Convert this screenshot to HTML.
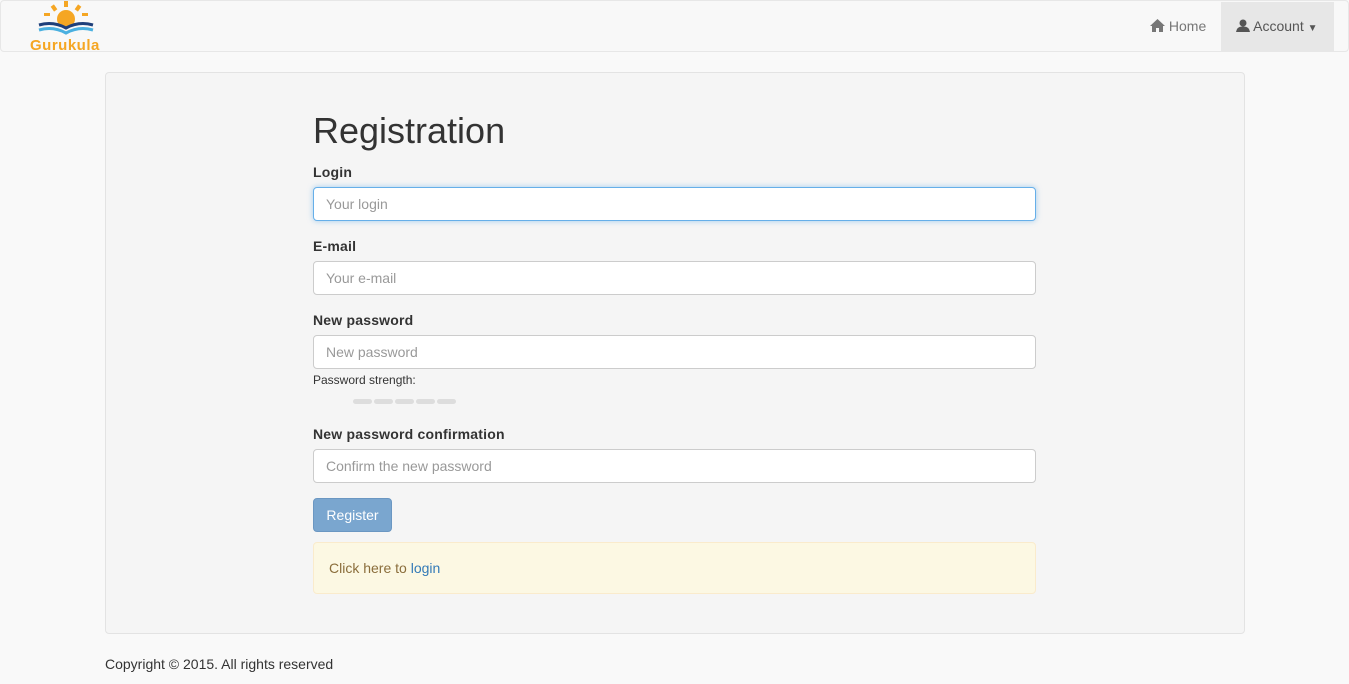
<!DOCTYPE html>
<html><head><meta charset="utf-8"><style>
body{margin:0;background:#f9f9f9;font-family:"Liberation Sans",sans-serif;font-size:14px;color:#333;width:1349px;height:684px;overflow:hidden;position:relative}
.nav{position:absolute;left:0;top:0;width:1347px;height:50px;background:#f8f8f8;border:1px solid #e7e7e7;border-radius:4px}
.nav .home{position:absolute;left:1149px;top:17px;color:#777}
.nav .acct{position:absolute;left:1220px;top:1px;width:113px;height:50px;background:#e7e7e7;color:#555}
.well{position:absolute;left:105px;top:72px;width:1138px;height:560px;background:#f5f5f5;border:1px solid #e3e3e3;border-radius:4px}
h1{position:absolute;left:313px;top:111px;margin:0;font-size:36px;font-weight:500;line-height:40px}
label{position:absolute;left:313px;font-weight:bold;letter-spacing:.2px}
.inp{position:absolute;left:313px;width:721px;height:32px;border:1px solid #ccc;border-radius:4px;background:#fff;color:#999;line-height:32px;text-indent:12px}
.foc{border-color:#66afe9;box-shadow:0 0 6px rgba(102,175,233,.6)}
.bar{position:absolute;top:399px;width:19px;height:5px;border-radius:3px;background:#ddd}
.btn{position:absolute;left:313px;top:498px;width:77px;height:32px;background:#7aa6cf;border:1px solid #6b97c2;border-radius:4px;color:#fff;line-height:32px;text-align:center}
.alert{position:absolute;left:313px;top:542px;width:721px;height:50px;background:#fcf8e3;border:1px solid #faebcc;border-radius:4px;color:#8a6d3b;line-height:50px;text-indent:15px}
</style></head><body>
<div class="nav">
<svg style="position:absolute;left:34px;top:0" width="62" height="34" viewBox="0 0 62 34"><g fill="#f5a623"><circle cx="31" cy="18" r="9"/><rect x="29" y="0" width="4" height="6"/><rect x="17" y="4" width="4" height="6" transform="rotate(-35 19 7)"/><rect x="41" y="4" width="4" height="6" transform="rotate(35 43 7)"/><rect x="9" y="12" width="6" height="3"/><rect x="47" y="12" width="6" height="3"/></g><path d="M4 24 Q18 20 31 27 Q44 20 58 24" stroke="#1e3f7a" stroke-width="3" fill="none"/><path d="M4 29 Q18 25 31 32 Q44 25 58 29" stroke="#4ab0e0" stroke-width="3" fill="none"/></svg>
<div style="position:absolute;left:29px;top:36px;color:#f5a623;font-weight:bold;font-size:15px;letter-spacing:.5px">Gurukula</div>
<div class="home"><svg width="15" height="13" viewBox="0 0 15 13" style="vertical-align:-1px"><path d="M7.5 0 L15 7 H13 V13 H9 V9 H6 V13 H2 V7 H0 Z" fill="#777"/></svg> Home</div>
<div class="acct"><span style="position:absolute;left:15px;top:16px"><svg width="14" height="13" viewBox="0 0 14 13" style="vertical-align:-1px"><circle cx="7" cy="4" r="3.5" fill="#555"/><path d="M0 13 Q1 7 7 7.5 Q13 7 14 13 Z" fill="#555"/></svg> Account <span style="font-size:10px">&#9660;</span></span></div>
</div>
<div class="well"></div>
<h1>Registration</h1>
<label style="top:164px">Login</label><div class="inp foc" style="top:187px">Your login</div>
<label style="top:238px">E-mail</label><div class="inp" style="top:261px">Your e-mail</div>
<label style="top:312px">New password</label><div class="inp" style="top:335px">New password</div>
<div style="position:absolute;left:313px;top:373px;font-size:12px">Password strength:</div>
<div class="bar" style="left:353px"></div><div class="bar" style="left:374px"></div><div class="bar" style="left:395px"></div><div class="bar" style="left:416px"></div><div class="bar" style="left:437px"></div>
<label style="top:426px">New password confirmation</label><div class="inp" style="top:449px">Confirm the new password</div>
<div class="btn">Register</div>
<div class="alert">Click here to <span style="color:#337ab7">login</span></div>
<div style="position:absolute;left:105px;top:656px">Copyright © 2015. All rights reserved</div>
</body></html>
